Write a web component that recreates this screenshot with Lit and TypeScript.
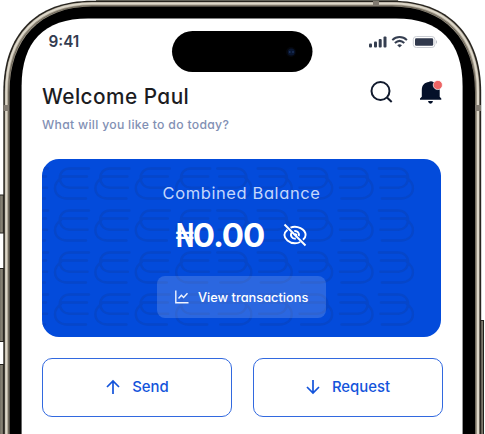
import { LitElement, html, svg, css } from "lit";
import { customElement } from "lit/decorators.js";

@customElement("phone-shell")
class PhoneShell extends LitElement {
  static styles = css`
    :host { display: block; }
    svg { display: block; }
  `;
  render() {
    return html`<svg width="485" height="434" viewBox="0 0 485 434">
      <defs>
        <linearGradient id="key" x1="0" x2="1"><stop offset="0" stop-color="#625e54"/><stop offset=".6" stop-color="#8b8678"/><stop offset="1" stop-color="#37342e"/></linearGradient>
      </defs>
      <g fill="url(#key)" stroke="#24221e" stroke-width="1">
        <rect x="-1" y="195" width="5" height="38"/>
        <rect x="-1" y="268.500" width="5" height="73"/>
        <rect x="-1" y="364.500" width="5" height="80"/>
        <rect x="480.500" y="320.500" width="3" height="120"/>
      </g>
      <path d="M96 0H398" stroke="#77766c" stroke-width="2"/>
      <path d="M3.300 440V92C3.300 34 36 .7 92 .7H392C448 .7 481.200 34 481.200 92V440Z" fill="#27241f"/>
      <path d="M4.800 440V92C4.800 35 37 2 92 2H392C447 2 479.600 35 479.600 92V440Z" fill="#a39b8c"/>
      <path d="M6.300 440V92C6.300 36 38 3.600 92 3.600H392C446 3.600 478 36 478 92V440" fill="none" stroke="#ddd7c9" stroke-width="2"/>
      <path d="M8.600 440V92C8.600 38 39 5.800 92 5.800H392C445 5.800 475.600 38 475.600 92V440" fill="none" stroke="#6d6659" stroke-width="1"/>
      <g fill="#817a70"><rect x="3.500" y="105" width="6" height="6"/><rect x="475" y="105" width="6" height="6"/><rect x="373" y="1" width="6" height="5"/></g>
      <path d="M9.500 440V92C9.500 39 40 6.500 92 6.500H392C444 6.500 475 39 475 92V440Z" fill="#000"/>
      <path d="M21.600 440V86C21.600 42 44 18.500 88 18.500H396C440 18.500 462.600 42 462.600 86V440Z" fill="#fff"/>
      <rect x="172" y="31" width="140.500" height="41" rx="20.500" fill="#000"/>
      <circle cx="291" cy="52" r="5" fill="#05070d"/>
      <circle cx="291.300" cy="52" r="3.500" fill="#081530"/>
      <circle cx="289.800" cy="52" r=".8" fill="#294475"/><circle cx="293" cy="52" r=".8" fill="#294475"/>
    </svg>`;
  }
}

@customElement("card-pattern")
class CardPattern extends LitElement {
  static styles = css`
    :host { display: block; }
    svg { display: block; }
    .lines { fill: none; stroke: #0646c9; stroke-width: 2.4; stroke-linecap: round; }
  `;
  render() {
    const rows = [0, 1, 2, 3];
    const loop = "M34 0H14.500C9 0 4.800 4 4.800 9.600S9 19.200 14.500 19.200H32.500M32 8H6.500M6 9.500C2.500 12 0 15.500 0 19.500C0 26 5 30 12 30H31";
    return html`<svg width="399" height="178" viewBox="0 0 399 178">
      <g class="lines">
        ${rows.map((r) => svg`<g transform=${`translate(0 ${9.5 + r * 42})`}>
          <path d="M1 0H6M1 8H4M1 19.200H5M1 30H3"/>
          ${[0, 1, 2, 3].map((c) => svg`<path transform=${`translate(${13 + c * 40.4} 0)`} d=${loop}/>`)}
          ${[0, 1, 2, 3, 4].map((c) => svg`<path transform=${`translate(${209.3 + c * 40.4} 0) scale(-1 1)`} d=${loop}/>`)}
        </g>`)}
      </g>
    </svg>`;
  }
}

@customElement("app-root")
class AppRoot extends LitElement {
  static styles = css`
    :host {
      display: block; position: relative; width: 485px; height: 434px; overflow: hidden;
      background: #fff; font-family: Inter, "Noto Sans", sans-serif; font-feature-settings: "cv11";
    }
    * { box-sizing: border-box; }
    svg { display: block; }
    .shell, .pattern { position: absolute; inset: 0; }
    .screen { position: relative; display: flex; flex-direction: column; padding: 32px 42px 0; }
    .row { display: flex; align-items: center; }
    .status { height: 18px; justify-content: space-between; padding: 0 5px 0 6.500px; }
    .time { font-size: 15.300px; font-weight: 600; color: #343c50; }
    .signals { display: block; }
    .header { display: flex; justify-content: space-between; margin-top: 10px; height: 99px; }
    h1 { margin: 24px 0 0; font-size: 20.800px; line-height: 26px; font-weight: 500; color: #1c1c1f; letter-spacing: .45px; white-space: nowrap; }
    .sub { margin: 6px 0 0; font-size: 12.200px; line-height: 18px; font-weight: 500; color: #8290b4; letter-spacing: .31px; white-space: nowrap; }
    .card { position: relative; width: 399px; height: 178px; border-radius: 17px; background: #034bdb; overflow: hidden; }
    .content { position: relative; display: flex; flex-direction: column; align-items: center; padding-top: 22px; color: #fff; }
    .label { font-size: 16.500px; line-height: 24px; color: #c5d7fb; letter-spacing: .6px; }
    .balance { height: 50px; gap: 19px; margin-top: 5px; }
    .amount { display: flex; font-size: 33px; line-height: 50px; font-weight: 700; letter-spacing: -1.100px; }
    .naira { transform: scaleX(.72); transform-origin: right; margin: 0 0 0 -7px; }
    .view { width: 169px; height: 42px; margin-top: 16px; border-radius: 8px; background: rgba(255, 255, 255, .16); gap: 8px; padding-left: 17px; font-size: 12.800px; font-weight: 500; white-space: nowrap; }
    .actions { display: grid; grid-template-columns: 190px 190px; gap: 20.500px; margin-top: 20.500px; }
    .action { height: 59px; border: 1.300px solid #3269df; border-radius: 10px; color: #1354db; font-size: 14.900px; font-weight: 500; justify-content: center; gap: 11px; }
  `;

  private arrow(d: string) {
    return html`<svg width="16" height="16" viewBox="0 0 16 16" fill="none" stroke="#1354db" stroke-width="1.700"><path d=${d}/></svg>`;
  }

  render() {
    return html`
      <phone-shell class="shell"></phone-shell>
      <div class="screen">
        <div class="row status">
          <span class="time">9:41</span>
          <svg class="signals" width="70" height="14" viewBox="0 0 70 14">
            <g fill="#353e50"><rect x="1" y="9.500" width="3" height="4" rx="1"/><rect x="6" y="7.500" width="3" height="6" rx="1"/><rect x="10.700" y="5" width="3" height="8.500" rx="1"/><rect x="15.500" y="2.500" width="3" height="11" rx="1"/></g>
            <g fill="none" stroke="#353e50" stroke-width="2"><path d="M24.300 6.100C28.500 2.100 34.700 2.100 38.900 6.100M26.900 9.100C29.800 6.400 33.400 6.400 36.300 9.100"/></g>
            <path d="M29.200 11.200Q31.600 9.400 34 11.200L31.600 13.500Z" fill="#353e50"/>
            <rect x="45.300" y="2.500" width="21.600" height="11" rx="3" fill="#fff" stroke="#cacdd3"/>
            <rect x="47" y="4.200" width="18.200" height="7.600" rx="1.300" fill="#30384c"/>
            <path d="M68 6Q70 8 68 10Z" fill="#b8bbc3"/>
          </svg>
        </div>
        <div class="header">
          <div>
            <h1>Welcome Paul</h1>
            <p class="sub">What will you like to do today?</p>
          </div>
          <svg width="75" height="50" viewBox="0 0 75 50">
            <g fill="none" stroke="#111a2d" stroke-width="2"><circle cx="12.500" cy="31" r="9"/><path d="M19 37.500L23.700 42"/></g>
            <path d="M52 39.800V38.500L53.800 36.800V30C53.800 24.800 57 22.300 60.700 22C62 21 64 21 65.300 22C69 22.500 71.700 25 71.700 30V36.800L73.300 38.500V39.800Z" fill="#041029"/>
            <path d="M60 41H65Q64.500 43.700 62.500 43.700T60 41Z" fill="#041029"/>
            <circle cx="69.800" cy="25" r="4.600" fill="#ed6464" stroke="#fff" stroke-width=".7"/>
          </svg>
        </div>
        <div class="card">
          <card-pattern class="pattern"></card-pattern>
          <div class="content">
            <div class="label">Combined Balance</div>
            <div class="row balance">
              <span class="amount"><span class="naira">₦</span><span>0.00</span></span>
              <svg width="24" height="24" viewBox="0 0 24 24" fill="none" stroke="#fff" stroke-width="1.900">
                <path d="M4.500 6.800C2.500 8.500 1.400 10.600 1.400 12C1.400 15.500 6 20.300 12 20.300C14 20.300 15.700 19.800 17.200 19M7.500 4.700C14 1.700 22.600 6.500 22.600 12C22.600 13.700 21.500 15.500 20 16.800"/>
                <path d="M8.700 9.500C6.600 12.800 9.400 16.300 12.800 15.500M11.300 8C14.500 7.500 16.800 10.500 15.800 13.200M12 10.700L14 12.500"/>
                <path d="M1.500 1.500L22.500 22.500"/>
              </svg>
            </div>
            <div class="row view">
              <svg width="16" height="16" viewBox="0 0 16 16" fill="none" stroke="#f0f4ff" stroke-width="1.400"><path d="M1.800 1.500V13.700H14.500M4.500 9.500L7.400 6.200L9.600 8.400L13.500 4.300"/></svg>
              <span>View transactions</span>
            </div>
          </div>
        </div>
        <div class="actions">
          <div class="row action">${this.arrow("M8 15V2M2 8L8 2L14 8")}<span>Send</span></div>
          <div class="row action">${this.arrow("M8 1V14M2 8L8 14L14 8")}<span>Request</span></div>
        </div>
      </div>`;
  }
}
